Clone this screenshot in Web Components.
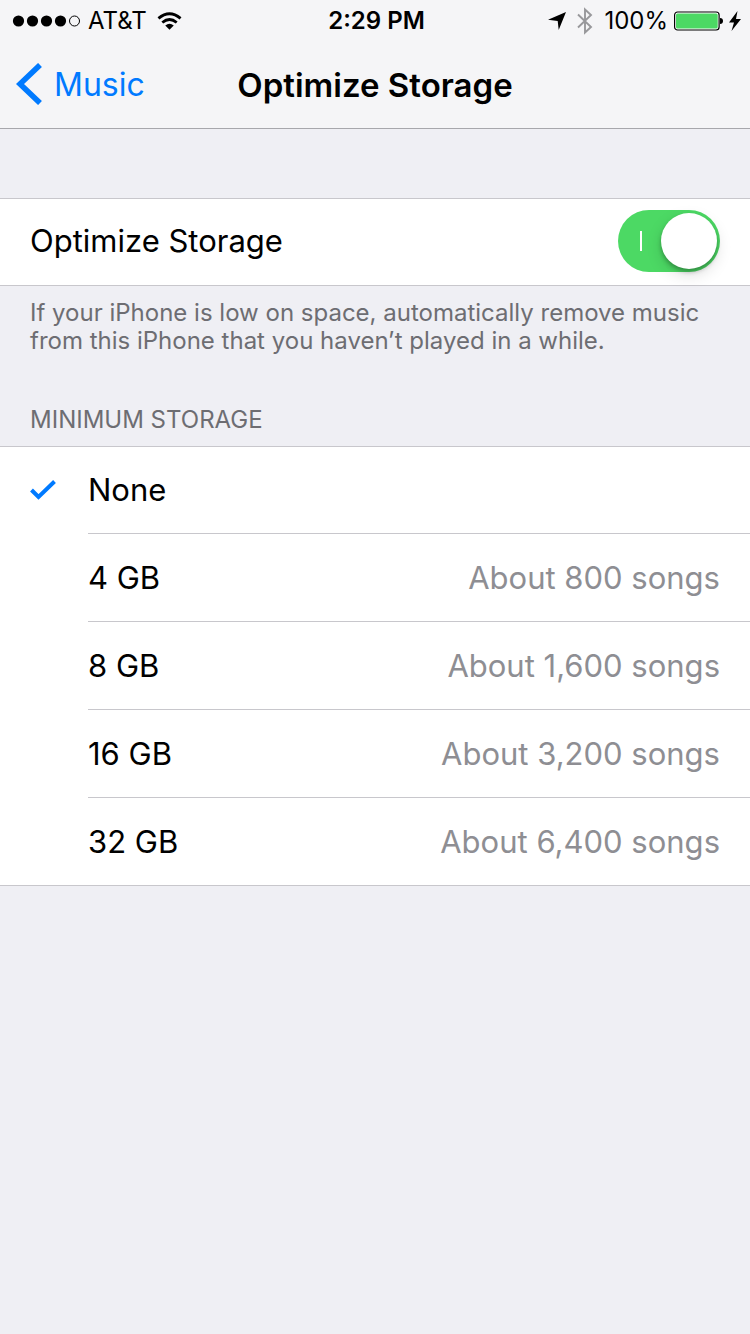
<!DOCTYPE html>
<html lang="en">
<head>
<meta charset="utf-8">
<meta name="viewport" content="width=device-width">
<title>Optimize Storage</title>
<style>
  body { margin: 0; background: #efeff4; color: #000; font-family: Inter, "Liberation Sans", sans-serif; font-size: 31px; line-height: 40px; }
</style>
</head>
<body>
<settings-screen>
  <status-bar slot="header" carrier="AT&amp;T" time="2:29 PM" battery="100%"></status-bar>
  <nav-bar slot="header" back="Music">Optimize Storage</nav-bar>
  <settings-group>
    <switch-row>Optimize Storage</switch-row>
    <span slot="note">If your iPhone is low on space, automatically remove music from this iPhone that you haven’t played in a while.</span>
  </settings-group>
  <settings-group>
    <span slot="title">MINIMUM STORAGE</span>
    <storage-choices></storage-choices>
  </settings-group>
</settings-screen>
<script>
class BaseElement extends HTMLElement {
  connectedCallback() {
    if (this.shadowRoot) return;
    this.attachShadow({ mode: "open" }).innerHTML =
      "<style>*{box-sizing:border-box}:host{box-sizing:border-box}svg{display:block;flex:none}</style>" + this.render();
  }
}

customElements.define("settings-screen", class extends BaseElement {
  render() {
    return `
      <style>
        :host { display: block; min-height: 100vh; }
        header { background: #f5f5f7; border-bottom: 1px solid #a7a7ac; }
        main { display: flex; flex-direction: column; gap: 46px; padding-top: 69px; }
      </style>
      <header><slot name="header"></slot></header>
      <main><slot></slot></main>`;
  }
});

customElements.define("status-bar", class extends BaseElement {
  render() {
    const carrier = this.getAttribute("carrier").replace("&", "&amp;");
    return `
      <style>
        :host { display: grid; grid-template-columns: 1fr auto 1fr; align-items: center; height: 40px; padding: 2px 9px 0 12px; font-size: 24px; line-height: 32px; }
        div { display: flex; align-items: center; }
        .left { gap: 7px; }
        .wifi { margin-left: 3px; }
        .time { font-weight: 600; }
        .right { justify-content: flex-end; gap: 6px; }
        .bluetooth { margin: 0 5px; }
      </style>
      <div class="left">
        <svg width="69" height="12" viewBox="0 0 69 12" role="img" aria-label="Signal strength">
          <circle cx="6.500" cy="6" r="5.600"/><circle cx="20.500" cy="6" r="5.600"/><circle cx="34.500" cy="6" r="5.600"/><circle cx="48.500" cy="6" r="5.600"/>
          <circle cx="62.500" cy="6" r="5" fill="none" stroke="#000"/>
        </svg>
        <span>${carrier}</span>
        <svg class="wifi" width="25" height="18" viewBox="0 0 26 18" role="img" aria-label="Wi-Fi">
          <g fill="none" stroke="#000" stroke-width="2.900"><path d="M1.500 6.300Q13 -3.400 24.500 6.300"/><path d="M5.500 10.600Q13 4.400 20.500 10.600"/></g>
          <path d="M8.600 13.600Q13 10 17.400 13.600L13 18Z"/>
        </svg>
      </div>
      <div class="time">${this.getAttribute("time")}</div>
      <div class="right">
        <svg width="18" height="18" viewBox="0 0 18 18" role="img" aria-label="Location"><path d="M18 0L10.700 18L9.700 9L0 7.800Z"/></svg>
        <svg class="bluetooth" width="16" height="28" viewBox="0 0 16 28" role="img" aria-label="Bluetooth"><path d="M1 7.500L14 20L8 25.500V2.500L14 8L1 20.500" fill="none" stroke="#98989b" stroke-width="1.900"/></svg>
        <span>${this.getAttribute("battery")}</span>
        <svg width="49" height="20" viewBox="0 0 49 20" role="img" aria-label="Battery full">
          <rect x=".6" y="1" width="44.500" height="18" rx="3" fill="#fff" stroke="#000" stroke-width="1.200"/>
          <rect x="2" y="2.500" width="41.700" height="15" rx="1.500" fill="#4cd964"/>
          <path d="M46 7Q49 7 49 10Q49 13 46 13Z"/>
        </svg>
        <svg width="12" height="20" viewBox="0 0 12 20" role="img" aria-label="Charging"><path d="M8.500 0L0 11.500H5L2.500 20L12 8H7Z"/></svg>
      </div>`;
  }
});

customElements.define("nav-bar", class extends BaseElement {
  render() {
    return `
      <style>
        :host { display: grid; grid-template-columns: 1fr auto 1fr; align-items: center; height: 88px; padding: 0 16px; }
        a { display: flex; align-items: center; gap: 12px; color: #007aff; font-size: 32px; text-decoration: none; }
        h1 { margin: 0; font-size: 33px; font-weight: 600; }
        h1, span { padding-top: 2px; }
      </style>
      <a href="#music"><svg width="26" height="42" viewBox="0 0 26 42" aria-hidden="true"><path d="M24 2L4 21L24 40" fill="none" stroke="#007aff" stroke-width="5.600"/></svg><span>${this.getAttribute("back")}</span></a>
      <h1><slot></slot></h1>`;
  }
});

customElements.define("settings-group", class extends BaseElement {
  render() {
    return `
      <style>
        :host { display: block; }
        .title, .note { display: block; color: #6d6d72; font-size: 24px; line-height: 28px; padding: 0 30px; }
        .title::slotted(*) { display: block; padding: 5px 0 12px; }
        .note::slotted(*) { display: block; padding-top: 13px; }
        .rows { background: #fff; box-shadow: inset 0 1px #c8c7cc, inset 0 -1px #c8c7cc; }
      </style>
      <slot class="title" name="title"></slot>
      <div class="rows"><slot></slot></div>
      <slot class="note" name="note"></slot>`;
  }
});

customElements.define("switch-row", class extends BaseElement {
  render() {
    return `
      <style>
        :host { display: block; }
        label { display: flex; align-items: center; justify-content: space-between; min-height: 88px; padding: 0 30px 2px; }
        input { appearance: none; display: flex; align-items: center; justify-content: space-between; width: 102px; height: 62px; margin: 0; padding: 0 3px; border-radius: 31px; background: #e5e5ea; }
        input:checked { background: #4cd964; }
        input:checked::before { content: ""; width: 2px; height: 20px; margin-left: 19px; background: #fff; }
        input::after { content: ""; width: 56px; height: 56px; border-radius: 50%; background: #fff; box-shadow: 0 3px 4px #0004, 0 6px 16px #0002; }
      </style>
      <label><slot></slot><input type="checkbox" role="switch" checked></label>`;
  }
});

customElements.define("storage-choices", class extends BaseElement {
  render() {
    const choices = [["None", ""], ["4 GB", "About 800 songs"], ["8 GB", "About 1,600 songs"], ["16 GB", "About 3,200 songs"], ["32 GB", "About 6,400 songs"]];
    return `
      <style>
        :host { display: block; }
        label { display: grid; grid-template-columns: 58px 1fr; align-items: center; padding-left: 30px; position: relative; }
        input { appearance: none; position: absolute; inset: 0; margin: 0; }
        svg { visibility: hidden; }
        input:checked + svg { visibility: visible; }
        .text { display: flex; align-items: center; justify-content: space-between; min-height: 88px; padding-right: 30px; border-bottom: 1px solid #c8c7cc; }
        .detail { color: #8e8e93; }
      </style>
      <div role="radiogroup" aria-label="Minimum storage">${choices.map(([size, songs], i) => `
        <label>
          <input type="radio" name="minimum" value="${size}"${i === 0 ? " checked" : ""}>
          <svg width="26" height="20" viewBox="0 0 26 20" aria-hidden="true"><path d="M1.500 10L8.500 17L24.500 1.500" fill="none" stroke="#007aff" stroke-width="4"/></svg>
          <span class="text"><span>${size}</span><span class="detail">${songs}</span></span>
        </label>`).join("")}
      </div>`;
  }
});
</script>
</body>
</html>
